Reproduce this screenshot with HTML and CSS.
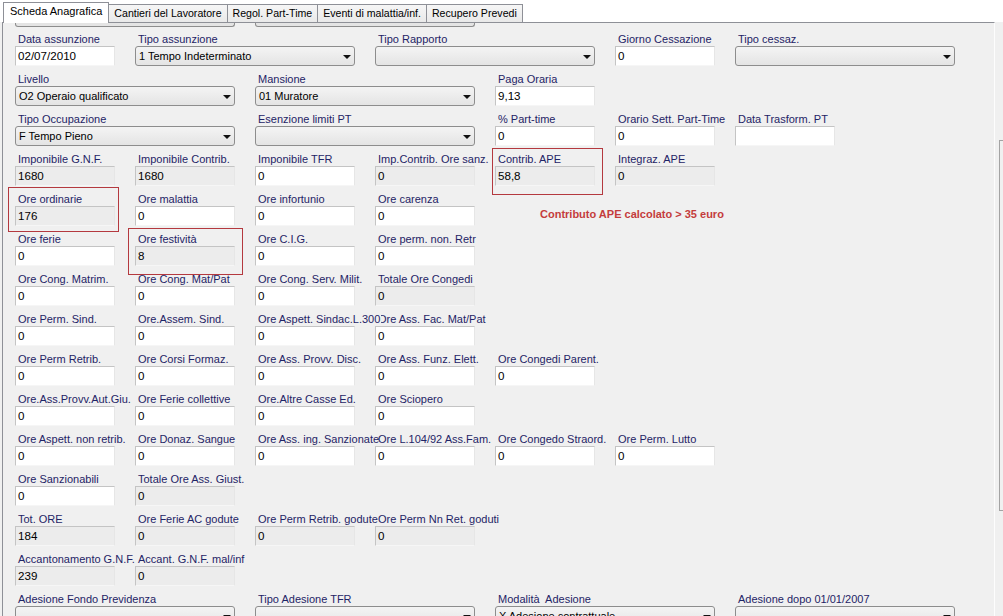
FILE: index.html
```html
<!DOCTYPE html>
<html lang="it">
<head>
<meta charset="utf-8">
<title>Scheda Anagrafica</title>
<link rel="stylesheet" href="styles.css">
</head>
<body>
<div class="tabs">
  <div class="tab active">Scheda Anagrafica</div>
  <div class="tab">Cantieri del Lavoratore</div>
  <div class="tab">Regol. Part-Time</div>
  <div class="tab">Eventi di malattia/inf.</div>
  <div class="tab">Recupero Prevedi</div>
</div>
<div class="panel">
  <div class="ghosts">
    <div class="ghost c1"></div>
    <div class="ghost c3"></div>
  </div>
  <div class="form">
    <div class="row">
      <div class="field c1"><div class="lbl">Data assunzione</div><div class="box edit">02/07/2010</div></div>
      <div class="field c2 wide"><div class="lbl">Tipo assunzione</div><div class="box combo"><span>1 Tempo Indeterminato</span><i class="arrow"></i></div></div>
      <div class="field c4 wide"><div class="lbl">Tipo Rapporto</div><div class="box combo"><span></span><i class="arrow"></i></div></div>
      <div class="field c6"><div class="lbl">Giorno Cessazione</div><div class="box edit">0</div></div>
      <div class="field c7 wide"><div class="lbl">Tipo cessaz.</div><div class="box combo"><span></span><i class="arrow"></i></div></div>
    </div>
    <div class="row">
      <div class="field c1 wide"><div class="lbl">Livello</div><div class="box combo"><span>O2 Operaio qualificato</span><i class="arrow"></i></div></div>
      <div class="field c3 wide"><div class="lbl">Mansione</div><div class="box combo"><span>01 Muratore</span><i class="arrow"></i></div></div>
      <div class="field c5"><div class="lbl">Paga Oraria</div><div class="box edit">9,13</div></div>
    </div>
    <div class="row">
      <div class="field c1 wide"><div class="lbl">Tipo Occupazione</div><div class="box combo"><span>F Tempo Pieno</span><i class="arrow"></i></div></div>
      <div class="field c3 wide"><div class="lbl">Esenzione limiti PT</div><div class="box combo"><span></span><i class="arrow"></i></div></div>
      <div class="field c5"><div class="lbl">% Part-time</div><div class="box edit">0</div></div>
      <div class="field c6"><div class="lbl">Orario Sett. Part-Time</div><div class="box edit">0</div></div>
      <div class="field c7"><div class="lbl">Data Trasform. PT</div><div class="box edit"></div></div>
    </div>
    <div class="row">
      <div class="field c1"><div class="lbl">Imponibile G.N.F.</div><div class="box ro">1680</div></div>
      <div class="field c2"><div class="lbl">Imponibile Contrib.</div><div class="box ro">1680</div></div>
      <div class="field c3"><div class="lbl">Imponibile TFR</div><div class="box edit">0</div></div>
      <div class="field c4"><div class="lbl">Imp.Contrib. Ore sanz.</div><div class="box ro">0</div></div>
      <div class="field c5"><div class="lbl">Contrib. APE</div><div class="box ro">58,8</div><div class="mark mark-ape"></div></div>
      <div class="field c6"><div class="lbl">Integraz. APE</div><div class="box ro">0</div></div>
    </div>
    <div class="row">
      <div class="field c1"><div class="lbl">Ore ordinarie</div><div class="box ro">176</div><div class="mark mark-ord"></div></div>
      <div class="field c2"><div class="lbl">Ore malattia</div><div class="box edit">0</div></div>
      <div class="field c3"><div class="lbl">Ore infortunio</div><div class="box edit">0</div></div>
      <div class="field c4"><div class="lbl">Ore carenza</div><div class="box edit">0</div></div>
      <div class="note">Contributo APE calcolato &gt; 35 euro</div>
    </div>
    <div class="row">
      <div class="field c1"><div class="lbl">Ore ferie</div><div class="box edit">0</div></div>
      <div class="field c2"><div class="lbl">Ore festività</div><div class="box ro">8</div><div class="mark mark-fest"></div></div>
      <div class="field c3"><div class="lbl">Ore C.I.G.</div><div class="box edit">0</div></div>
      <div class="field c4"><div class="lbl">Ore perm. non. Retr</div><div class="box edit">0</div></div>
    </div>
    <div class="row">
      <div class="field c1"><div class="lbl">Ore Cong. Matrim.</div><div class="box edit">0</div></div>
      <div class="field c2"><div class="lbl">Ore Cong. Mat/Pat</div><div class="box edit">0</div></div>
      <div class="field c3"><div class="lbl">Ore Cong. Serv. Milit.</div><div class="box edit">0</div></div>
      <div class="field c4"><div class="lbl">Totale Ore Congedi</div><div class="box ro">0</div></div>
    </div>
    <div class="row">
      <div class="field c1"><div class="lbl">Ore Perm. Sind.</div><div class="box edit">0</div></div>
      <div class="field c2"><div class="lbl">Ore.Assem. Sind.</div><div class="box edit">0</div></div>
      <div class="field c3 top"><div class="lbl">Ore Aspett. Sindac.L.300</div><div class="box edit">0</div></div>
      <div class="field c4"><div class="lbl">Ore Ass. Fac. Mat/Pat</div><div class="box edit">0</div></div>
    </div>
    <div class="row">
      <div class="field c1"><div class="lbl">Ore Perm Retrib.</div><div class="box edit">0</div></div>
      <div class="field c2"><div class="lbl">Ore Corsi Formaz.</div><div class="box edit">0</div></div>
      <div class="field c3"><div class="lbl">Ore Ass. Provv. Disc.</div><div class="box edit">0</div></div>
      <div class="field c4"><div class="lbl">Ore Ass. Funz. Elett.</div><div class="box edit">0</div></div>
      <div class="field c5"><div class="lbl">Ore Congedi Parent.</div><div class="box edit">0</div></div>
    </div>
    <div class="row">
      <div class="field c1"><div class="lbl">Ore.Ass.Provv.Aut.Giu.</div><div class="box edit">0</div></div>
      <div class="field c2"><div class="lbl">Ore Ferie collettive</div><div class="box edit">0</div></div>
      <div class="field c3"><div class="lbl">Ore.Altre Casse Ed.</div><div class="box edit">0</div></div>
      <div class="field c4"><div class="lbl">Ore Sciopero</div><div class="box edit">0</div></div>
    </div>
    <div class="row">
      <div class="field c1"><div class="lbl">Ore Aspett. non retrib.</div><div class="box edit">0</div></div>
      <div class="field c2"><div class="lbl">Ore Donaz. Sangue</div><div class="box edit">0</div></div>
      <div class="field c3"><div class="lbl">Ore Ass. ing. Sanzionate</div><div class="box edit">0</div></div>
      <div class="field c4"><div class="lbl">Ore L.104/92 Ass.Fam.</div><div class="box edit">0</div></div>
      <div class="field c5"><div class="lbl">Ore Congedo Straord.</div><div class="box edit">0</div></div>
      <div class="field c6"><div class="lbl">Ore Perm. Lutto</div><div class="box edit">0</div></div>
    </div>
    <div class="row">
      <div class="field c1"><div class="lbl">Ore Sanzionabili</div><div class="box edit">0</div></div>
      <div class="field c2"><div class="lbl">Totale Ore Ass. Giust.</div><div class="box ro">0</div></div>
    </div>
    <div class="row">
      <div class="field c1"><div class="lbl">Tot. ORE</div><div class="box ro">184</div></div>
      <div class="field c2"><div class="lbl">Ore Ferie AC godute</div><div class="box ro">0</div></div>
      <div class="field c3"><div class="lbl">Ore Perm Retrib. godute</div><div class="box ro">0</div></div>
      <div class="field c4"><div class="lbl">Ore Perm Nn Ret. goduti</div><div class="box ro">0</div></div>
    </div>
    <div class="row">
      <div class="field c1"><div class="lbl">Accantonamento G.N.F.</div><div class="box ro">239</div></div>
      <div class="field c2"><div class="lbl">Accant. G.N.F. mal/inf</div><div class="box ro">0</div></div>
    </div>
    <div class="row">
      <div class="field c1 wide"><div class="lbl">Adesione Fondo Previdenza</div><div class="box combo"><span></span><i class="arrow"></i></div></div>
      <div class="field c3 wide"><div class="lbl">Tipo Adesione TFR</div><div class="box combo"><span></span><i class="arrow"></i></div></div>
      <div class="field c5 wide"><div class="lbl">Modalità&nbsp; Adesione</div><div class="box combo"><span>X Adesione contrattuale</span><i class="arrow"></i></div></div>
      <div class="field c7 wide"><div class="lbl">Adesione dopo 01/01/2007</div><div class="box combo"><span></span><i class="arrow"></i></div></div>
    </div>
  </div>
</div>
<div class="edge"></div>
</body>
</html>
```

FILE: styles.css
```css
html, body {
  margin: 0;
  padding: 0;
}

body {
  width: 1003px;
  height: 616px;
  overflow: hidden;
  position: relative;
  background: #f0f0f0;
  font-family: "Liberation Sans", Arial, sans-serif;
  font-size: 11px;
  color: #000;
}

/* Tabs */
.tabs {
  height: 22px;
  background: #fff;
  display: flex;
  align-items: flex-end;
  padding-left: 3px;
  box-sizing: border-box;
  position: relative;
  z-index: 2;
}

.tab {
  height: 18px;
  line-height: 17px;
  padding: 0 5px;
  margin-left: -1px;
  border: 1px solid #8e9097;
  border-bottom: none;
  box-sizing: border-box;
  background: linear-gradient(#f6f6f6, #e9e9e9);
  white-space: nowrap;
  font-size: 10.6px;
}

.tab.active {
  height: 21px;
  line-height: 17px;
  margin-bottom: -1px;
  margin-left: 0;
  padding: 0 6px;
  background: #fff;
  position: relative;
  z-index: 3;
  font-size: 11px;
}

/* Panel */
.panel {
  margin-left: 2px;
  width: 993px;
  height: 594px;
  box-sizing: border-box;
  border-top: 1px solid #8e9097;
  border-left: 1px solid #8e9097;
  border-right: 1px solid #fdfdfd;
  background: #f0f0f0;
}

.ghosts {
  display: grid;
  grid-template-columns: repeat(7, 120px);
  padding-left: 12px;
  height: 4px;
}

.ghost {
  grid-column-end: span 2;
  width: 220px;
  height: 4px;
  box-sizing: border-box;
  border: 1px solid #8d8d8d;
  border-top: none;
  border-radius: 0 0 3px 3px;
  background: #e4e4e4;
}

.form {
  margin-top: 5px;
  padding-left: 12px;
}

.row {
  display: grid;
  grid-template-columns: repeat(7, 120px);
  height: 40px;
}

.c1 { grid-column-start: 1; }
.c2 { grid-column-start: 2; }
.c3 { grid-column-start: 3; }
.c4 { grid-column-start: 4; }
.c5 { grid-column-start: 5; }
.c6 { grid-column-start: 6; }
.c7 { grid-column-start: 7; }
.wide { grid-column-end: span 2; }

.field {
  position: relative;
  display: flex;
  flex-direction: column;
  align-items: flex-start;
  grid-row: 1;
}

.field.top {
  z-index: 1;
}

.lbl {
  height: 14px;
  line-height: 14px;
  padding-left: 3px;
  color: #1f2466;
  white-space: nowrap;
}

.field.top .lbl {
  background: #f0f0f0;
  padding-right: 1px;
}

.box {
  width: 100px;
  height: 20px;
  box-sizing: border-box;
  line-height: 18px;
  padding-left: 2px;
  font-size: 11.6px;
  color: #000;
  border: 1px solid;
  border-color: #c4c4c4 #e6e6e6 #f6f6f6 #c4c4c4;
  white-space: nowrap;
  overflow: hidden;
}

.edit {
  background: #fff;
}

.ro {
  background: #ececec;
}

.combo {
  width: 220px;
  border: 1px solid #8d8d8d;
  border-radius: 3px;
  background: linear-gradient(#f4f4f4, #e4e4e4);
  display: flex;
  align-items: center;
  justify-content: space-between;
  padding: 0 3px 0 3px;
  font-size: 11px;
}

.arrow {
  width: 0;
  height: 0;
  border-left: 4px solid transparent;
  border-right: 4px solid transparent;
  border-top: 4px solid #111;
  margin-top: 1px;
}

/* Annotation note */
.note {
  grid-column: 5 / span 3;
  grid-row: 1;
  padding-left: 45px;
  padding-top: 15px;
  line-height: 14px;
  color: #c43c3c;
  font-weight: bold;
  white-space: nowrap;
}

/* Red highlight marks drawn over fields */
.mark {
  position: absolute;
  box-sizing: border-box;
  border: 1px solid #b4393f;
  pointer-events: none;
}

.mark-ord {
  left: -7px;
  top: -5px;
  width: 111px;
  height: 45px;
}

.mark-fest {
  left: -7px;
  top: -4px;
  width: 115px;
  height: 47px;
}

.mark-ape {
  left: -3px;
  top: -4px;
  width: 111px;
  height: 47px;
}

/* Partially visible control at the right edge */
.edge {
  position: absolute;
  left: 999px;
  top: 140px;
  width: 6px;
  height: 371px;
  box-sizing: border-box;
  border: 1px solid #a3a3a3;
  border-right: none;
}
```
